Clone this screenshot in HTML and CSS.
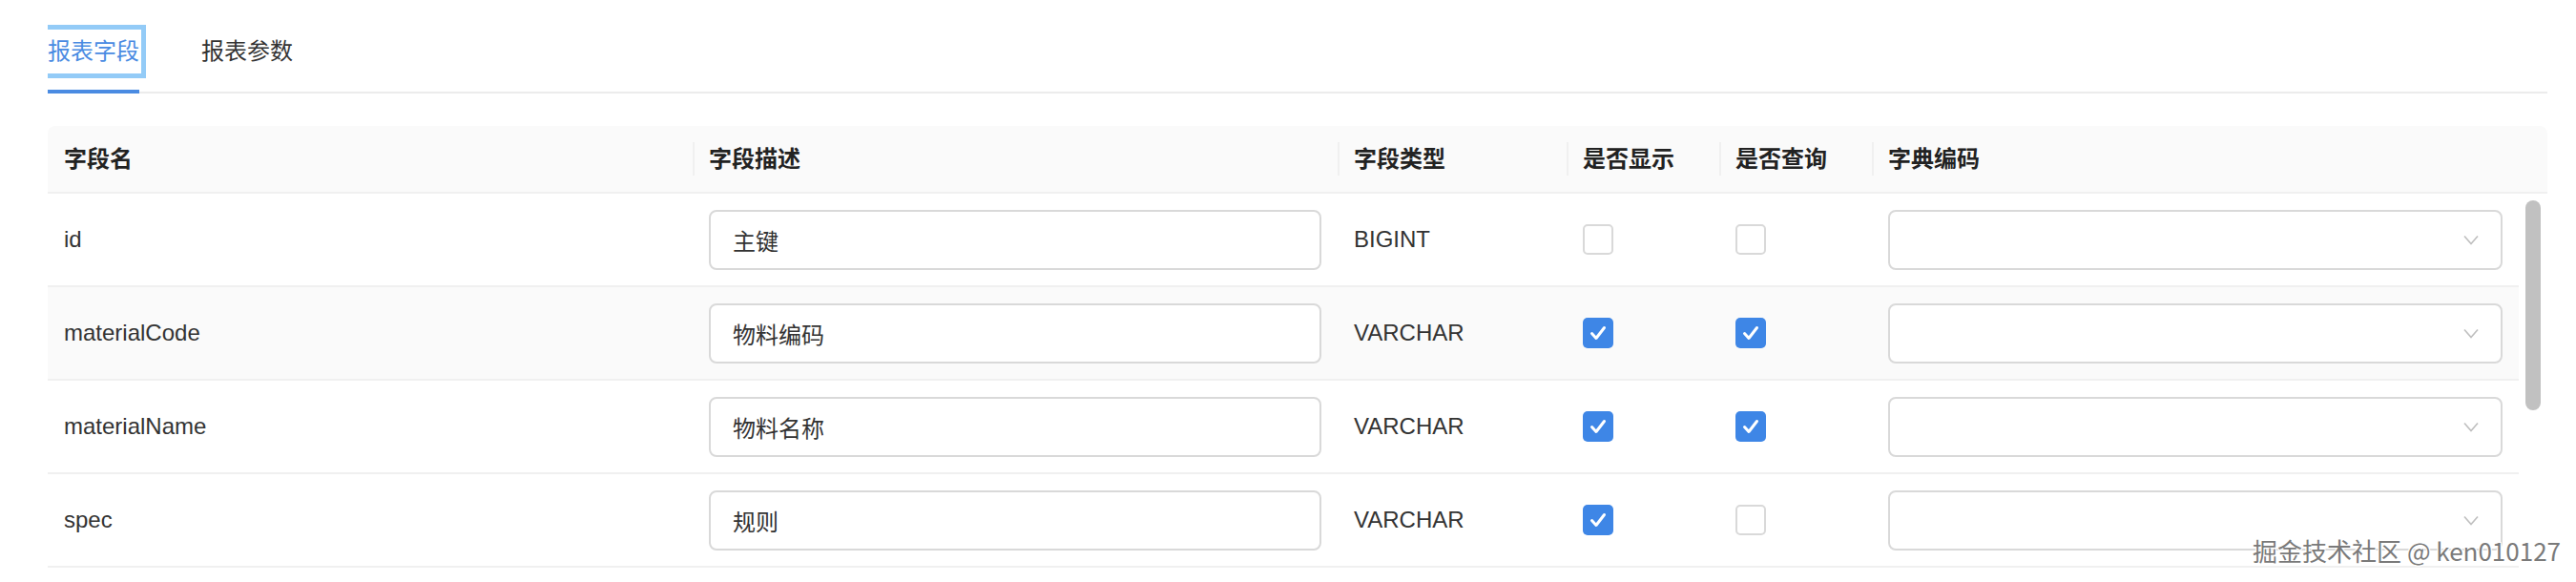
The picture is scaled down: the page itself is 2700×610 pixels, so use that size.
FILE: index.html
```html
<!DOCTYPE html>
<html lang="zh-CN">
<head>
<meta charset="utf-8">
<title>报表字段</title>
<link rel="stylesheet" href="styles.css">
</head>
<body>
<div class="page">
  <div class="tabs-nav">
    <div class="tab tab-active">报表字段</div>
    <div class="tab">报表参数</div>
    <div class="ink-bar"></div>
  </div>

  <div class="table">
    <div class="thead">
      <div class="th th-first">字段名</div>
      <div class="th">字段描述</div>
      <div class="th">字段类型</div>
      <div class="th">是否显示</div>
      <div class="th">是否查询</div>
      <div class="th">字典编码</div>
    </div>
    <div class="tbody">
      <div class="rows">
        <div class="tr">
          <div class="td">id</div>
          <div class="td"><div class="input">主键</div></div>
          <div class="td">BIGINT</div>
          <div class="td"><span class="checkbox"></span></div>
          <div class="td"><span class="checkbox"></span></div>
          <div class="td"><div class="select"><svg class="chev" width="16" height="11" viewBox="0 0 16 11"><path d="M1 1.5 L8 9.5 L15 1.5" fill="none" stroke="#bfbfbf" stroke-width="1.6"/></svg></div></div>
        </div>
        <div class="tr tr-hover">
          <div class="td">materialCode</div>
          <div class="td"><div class="input">物料编码</div></div>
          <div class="td">VARCHAR</div>
          <div class="td"><span class="checkbox checked"><svg width="32" height="32" viewBox="0 0 32 32"><path d="M9.5 16.5 L14 21.5 L22.5 10.5" fill="none" stroke="#fff" stroke-width="3" stroke-linecap="round" stroke-linejoin="round"/></svg></span></div>
          <div class="td"><span class="checkbox checked"><svg width="32" height="32" viewBox="0 0 32 32"><path d="M9.5 16.5 L14 21.5 L22.5 10.5" fill="none" stroke="#fff" stroke-width="3" stroke-linecap="round" stroke-linejoin="round"/></svg></span></div>
          <div class="td"><div class="select"><svg class="chev" width="16" height="11" viewBox="0 0 16 11"><path d="M1 1.5 L8 9.5 L15 1.5" fill="none" stroke="#bfbfbf" stroke-width="1.6"/></svg></div></div>
        </div>
        <div class="tr">
          <div class="td">materialName</div>
          <div class="td"><div class="input">物料名称</div></div>
          <div class="td">VARCHAR</div>
          <div class="td"><span class="checkbox checked"><svg width="32" height="32" viewBox="0 0 32 32"><path d="M9.5 16.5 L14 21.5 L22.5 10.5" fill="none" stroke="#fff" stroke-width="3" stroke-linecap="round" stroke-linejoin="round"/></svg></span></div>
          <div class="td"><span class="checkbox checked"><svg width="32" height="32" viewBox="0 0 32 32"><path d="M9.5 16.5 L14 21.5 L22.5 10.5" fill="none" stroke="#fff" stroke-width="3" stroke-linecap="round" stroke-linejoin="round"/></svg></span></div>
          <div class="td"><div class="select"><svg class="chev" width="16" height="11" viewBox="0 0 16 11"><path d="M1 1.5 L8 9.5 L15 1.5" fill="none" stroke="#bfbfbf" stroke-width="1.6"/></svg></div></div>
        </div>
        <div class="tr">
          <div class="td">spec</div>
          <div class="td"><div class="input">规则</div></div>
          <div class="td">VARCHAR</div>
          <div class="td"><span class="checkbox checked"><svg width="32" height="32" viewBox="0 0 32 32"><path d="M9.5 16.5 L14 21.5 L22.5 10.5" fill="none" stroke="#fff" stroke-width="3" stroke-linecap="round" stroke-linejoin="round"/></svg></span></div>
          <div class="td"><span class="checkbox"></span></div>
          <div class="td"><div class="select"><svg class="chev" width="16" height="11" viewBox="0 0 16 11"><path d="M1 1.5 L8 9.5 L15 1.5" fill="none" stroke="#bfbfbf" stroke-width="1.6"/></svg></div></div>
        </div>
      </div>
      <div class="scroll-track"><div class="scroll-thumb"></div></div>
    </div>
  </div>
</div>
<div class="watermark">掘金技术社区 @ ken010127</div>
</body>
</html>
```

FILE: styles.css
```css
html, body {
  margin: 0;
  padding: 0;
  background: #fff;
}
body {
  width: 2700px;
  height: 610px;
  overflow: hidden;
  position: relative;
  font-family: "Liberation Sans", "Noto Sans CJK SC", sans-serif;
  font-size: 24px;
  color: #333;
}
.page {
  padding-left: 50px;
  width: 2620px;
}

/* tabs */
.tabs-nav {
  position: relative;
  display: flex;
  align-items: center;
  gap: 58px;
  padding-top: 26px;
  padding-bottom: 14px;
  border-bottom: 2px solid #ececec;
}
.tab {
  height: 46px;
  line-height: 46px;
  color: #333;
}
.tab-active {
  color: #4a8be2;
  border: 5px solid #93cbf7;
  border-left: 0;
  padding-right: 2px;
}
.ink-bar {
  position: absolute;
  left: 0;
  bottom: -2px;
  width: 96px;
  height: 4px;
  background: #4a8be2;
}

/* table */
.table {
  margin-top: 34px;
}
.thead {
  display: grid;
  grid-template-columns: 676px 676px 240px 160px 160px 1fr;
  align-items: center;
  height: 69px;
  background: #fafafa;
  border-bottom: 2px solid #f0f0f0;
  border-radius: 8px 8px 0 0;
}
.th {
  height: 35px;
  line-height: 35px;
  border-left: 2px solid #f0f0f0;
  padding-left: 15px;
  font-weight: bold;
  color: #222;
}
.th-first {
  border-left: 0;
  padding-left: 17px;
}
.tbody {
  display: flex;
}
.rows {
  width: 2590px;
}
.tr {
  display: grid;
  grid-template-columns: 676px 676px 240px 160px 160px 1fr;
  height: 96px;
  border-bottom: 2px solid #f0f0f0;
  background: #fff;
}
.tr-hover {
  background: #fafafa;
}
.td {
  display: flex;
  align-items: center;
  padding: 0 17px;
  color: #333;
}
.input, .select {
  box-sizing: border-box;
  width: 100%;
  height: 63px;
  border: 2px solid #d9d9d9;
  border-radius: 8px;
  background: #fff;
  display: flex;
  align-items: center;
  padding: 0 23px;
  color: #333;
}
.select {
  justify-content: flex-end;
}
.checkbox {
  box-sizing: border-box;
  width: 32px;
  height: 32px;
  border: 2px solid #d9d9d9;
  border-radius: 5px;
  background: #fff;
  display: flex;
}
.checkbox.checked {
  background: #3e86e6;
  border: 0;
}
.scroll-track {
  width: 30px;
  display: flex;
  justify-content: center;
}
.scroll-thumb {
  margin-top: 7px;
  width: 16px;
  height: 220px;
  border-radius: 8px;
  background: #c1c1c1;
}

.watermark {
  position: absolute;
  right: 16px;
  bottom: 18px;
  line-height: 30px;
  font-size: 26px;
  font-family: "Noto Sans CJK SC", sans-serif;
  color: #7a7a7a;
  text-shadow: 1px 1px 0 #fff, -1px -1px 0 #fff, 1px -1px 0 #fff, -1px 1px 0 #fff;
}
```
